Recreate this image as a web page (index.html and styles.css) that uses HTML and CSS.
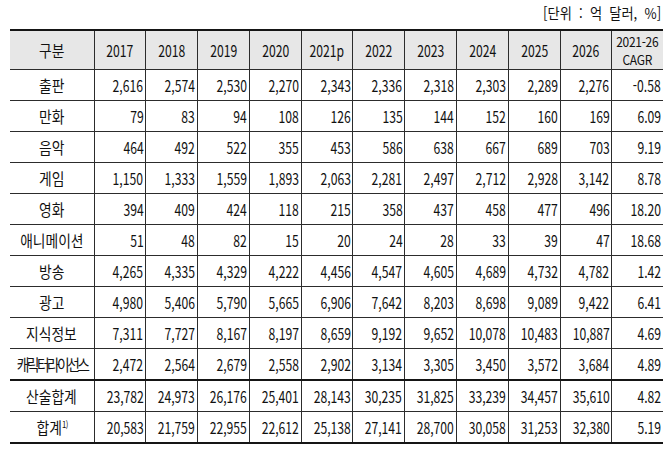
FILE: index.html
```html
<!DOCTYPE html>
<html lang="ko">
<head>
<meta charset="utf-8">
<title>콘텐츠 시장 규모</title>
<link rel="stylesheet" href="styles.css">
</head>
<body>
<div class="page">
  <div class="unit"><span class="u">[단위 : 억 달러, %]</span></div>
  <table class="data">
    <colgroup>
      <col class="c-label">
      <col span="10" class="c-year">
      <col class="c-cagr">
    </colgroup>
    <thead>
      <tr>
        <th><span class="k">구분</span></th>
        <th><span class="y">2017</span></th>
        <th><span class="y">2018</span></th>
        <th><span class="y">2019</span></th>
        <th><span class="y">2020</span></th>
        <th><span class="y">2021p</span></th>
        <th><span class="y">2022</span></th>
        <th><span class="y">2023</span></th>
        <th><span class="y">2024</span></th>
        <th><span class="y">2025</span></th>
        <th><span class="y">2026</span></th>
        <th class="two"><span class="yy">2021-26</span><span class="yy">CAGR</span></th>
      </tr>
    </thead>
    <tbody>
      <tr><td class="label"><span class="k">출판</span></td><td><span class="n">2,616</span></td><td><span class="n">2,574</span></td><td><span class="n">2,530</span></td><td><span class="n">2,270</span></td><td><span class="n">2,343</span></td><td><span class="n">2,336</span></td><td><span class="n">2,318</span></td><td><span class="n">2,303</span></td><td><span class="n">2,289</span></td><td><span class="n">2,276</span></td><td><span class="n">-0.58</span></td></tr>
      <tr><td class="label"><span class="k">만화</span></td><td><span class="n">79</span></td><td><span class="n">83</span></td><td><span class="n">94</span></td><td><span class="n">108</span></td><td><span class="n">126</span></td><td><span class="n">135</span></td><td><span class="n">144</span></td><td><span class="n">152</span></td><td><span class="n">160</span></td><td><span class="n">169</span></td><td><span class="n">6.09</span></td></tr>
      <tr><td class="label"><span class="k">음악</span></td><td><span class="n">464</span></td><td><span class="n">492</span></td><td><span class="n">522</span></td><td><span class="n">355</span></td><td><span class="n">453</span></td><td><span class="n">586</span></td><td><span class="n">638</span></td><td><span class="n">667</span></td><td><span class="n">689</span></td><td><span class="n">703</span></td><td><span class="n">9.19</span></td></tr>
      <tr><td class="label"><span class="k">게임</span></td><td><span class="n">1,150</span></td><td><span class="n">1,333</span></td><td><span class="n">1,559</span></td><td><span class="n">1,893</span></td><td><span class="n">2,063</span></td><td><span class="n">2,281</span></td><td><span class="n">2,497</span></td><td><span class="n">2,712</span></td><td><span class="n">2,928</span></td><td><span class="n">3,142</span></td><td><span class="n">8.78</span></td></tr>
      <tr><td class="label"><span class="k">영화</span></td><td><span class="n">394</span></td><td><span class="n">409</span></td><td><span class="n">424</span></td><td><span class="n">118</span></td><td><span class="n">215</span></td><td><span class="n">358</span></td><td><span class="n">437</span></td><td><span class="n">458</span></td><td><span class="n">477</span></td><td><span class="n">496</span></td><td><span class="n">18.20</span></td></tr>
      <tr><td class="label"><span class="k">애니메이션</span></td><td><span class="n">51</span></td><td><span class="n">48</span></td><td><span class="n">82</span></td><td><span class="n">15</span></td><td><span class="n">20</span></td><td><span class="n">24</span></td><td><span class="n">28</span></td><td><span class="n">33</span></td><td><span class="n">39</span></td><td><span class="n">47</span></td><td><span class="n">18.68</span></td></tr>
      <tr><td class="label"><span class="k">방송</span></td><td><span class="n">4,265</span></td><td><span class="n">4,335</span></td><td><span class="n">4,329</span></td><td><span class="n">4,222</span></td><td><span class="n">4,456</span></td><td><span class="n">4,547</span></td><td><span class="n">4,605</span></td><td><span class="n">4,689</span></td><td><span class="n">4,732</span></td><td><span class="n">4,782</span></td><td><span class="n">1.42</span></td></tr>
      <tr><td class="label"><span class="k">광고</span></td><td><span class="n">4,980</span></td><td><span class="n">5,406</span></td><td><span class="n">5,790</span></td><td><span class="n">5,665</span></td><td><span class="n">6,906</span></td><td><span class="n">7,642</span></td><td><span class="n">8,203</span></td><td><span class="n">8,698</span></td><td><span class="n">9,089</span></td><td><span class="n">9,422</span></td><td><span class="n">6.41</span></td></tr>
      <tr><td class="label"><span class="k">지식정보</span></td><td><span class="n">7,311</span></td><td><span class="n">7,727</span></td><td><span class="n">8,167</span></td><td><span class="n">8,197</span></td><td><span class="n">8,659</span></td><td><span class="n">9,192</span></td><td><span class="n">9,652</span></td><td><span class="n">10,078</span></td><td><span class="n">10,483</span></td><td><span class="n">10,887</span></td><td><span class="n">4.69</span></td></tr>
      <tr><td class="label"><span class="k squeeze">캐릭터라이선스</span></td><td><span class="n">2,472</span></td><td><span class="n">2,564</span></td><td><span class="n">2,679</span></td><td><span class="n">2,558</span></td><td><span class="n">2,902</span></td><td><span class="n">3,134</span></td><td><span class="n">3,305</span></td><td><span class="n">3,450</span></td><td><span class="n">3,572</span></td><td><span class="n">3,684</span></td><td><span class="n">4.89</span></td></tr>
      <tr class="sum"><td class="label"><span class="k">산술합계</span></td><td><span class="n">23,782</span></td><td><span class="n">24,973</span></td><td><span class="n">26,176</span></td><td><span class="n">25,401</span></td><td><span class="n">28,143</span></td><td><span class="n">30,235</span></td><td><span class="n">31,825</span></td><td><span class="n">33,239</span></td><td><span class="n">34,457</span></td><td><span class="n">35,610</span></td><td><span class="n">4.82</span></td></tr>
      <tr><td class="label"><span class="k">합계<sup class="note">1)</sup></span></td><td><span class="n">20,583</span></td><td><span class="n">21,759</span></td><td><span class="n">22,955</span></td><td><span class="n">22,612</span></td><td><span class="n">25,138</span></td><td><span class="n">27,141</span></td><td><span class="n">28,700</span></td><td><span class="n">30,058</span></td><td><span class="n">31,253</span></td><td><span class="n">32,380</span></td><td><span class="n">5.19</span></td></tr>
    </tbody>
  </table>
</div>
</body>
</html>
```

FILE: styles.css
```css
html, body {
  margin: 0;
  padding: 0;
  background: #ffffff;
}

body {
  font-family: "Noto Sans CJK KR", "Noto Sans", sans-serif;
  color: #111111;
}

.page {
  width: 653px;
  padding: 4px 0 0 10px;
}

.unit {
  height: 25px;
  line-height: 18px;
  font-size: 15px;
  text-align: right;
  padding-right: 2px;
}

.u {
  display: inline-block;
  transform: scaleX(0.88);
  transform-origin: 100% 50%;
  word-spacing: 4px;
}

.data {
  width: 653px;
  border-collapse: collapse;
  table-layout: fixed;
  border-top: 2px solid #151515;
  border-bottom: 2px solid #151515;
}

.c-label { width: 84px; }
.c-year { width: 51.8px; }
.c-cagr { width: 51px; }

.data th,
.data td {
  border: 1px solid #2c2c2c;
  font-size: 16px;
  font-weight: 400;
  line-height: 20px;
  white-space: nowrap;
  overflow: visible;
}

.data th:first-child,
.data td:first-child {
  border-left: none;
}

.data th:last-child,
.data td:last-child {
  border-right: none;
}

.data thead th {
  background: #e7e7e7;
  height: 37px;
  padding: 0;
  text-align: center;
  border-top: none;
}

.data thead th.two {
  padding: 1px 0 0;
}

.data tbody td {
  height: 30px;
  padding: 0 2px 0 0;
  text-align: right;
}

.data tbody td.label {
  text-align: center;
  padding: 0;
}

.data tbody tr.sum td {
  border-top: 2px solid #151515;
}

.k {
  display: inline-block;
  transform: scaleX(0.86);
  transform-origin: 50% 50%;
}

.squeeze {
  letter-spacing: -3px;
}

.y {
  display: inline-block;
  transform: scaleX(0.76);
  transform-origin: 50% 50%;
}

.yy {
  display: block;
  font-size: 13px;
  line-height: 18px;
  letter-spacing: -0.3px;
  transform: scaleX(0.92);
  transform-origin: 50% 50%;
}

.n {
  display: inline-block;
  transform: scaleX(0.76);
  transform-origin: 100% 50%;
}

.note {
  font-size: 9px;
  line-height: 0;
  vertical-align: 6px;
  letter-spacing: -0.5px;
}
```
